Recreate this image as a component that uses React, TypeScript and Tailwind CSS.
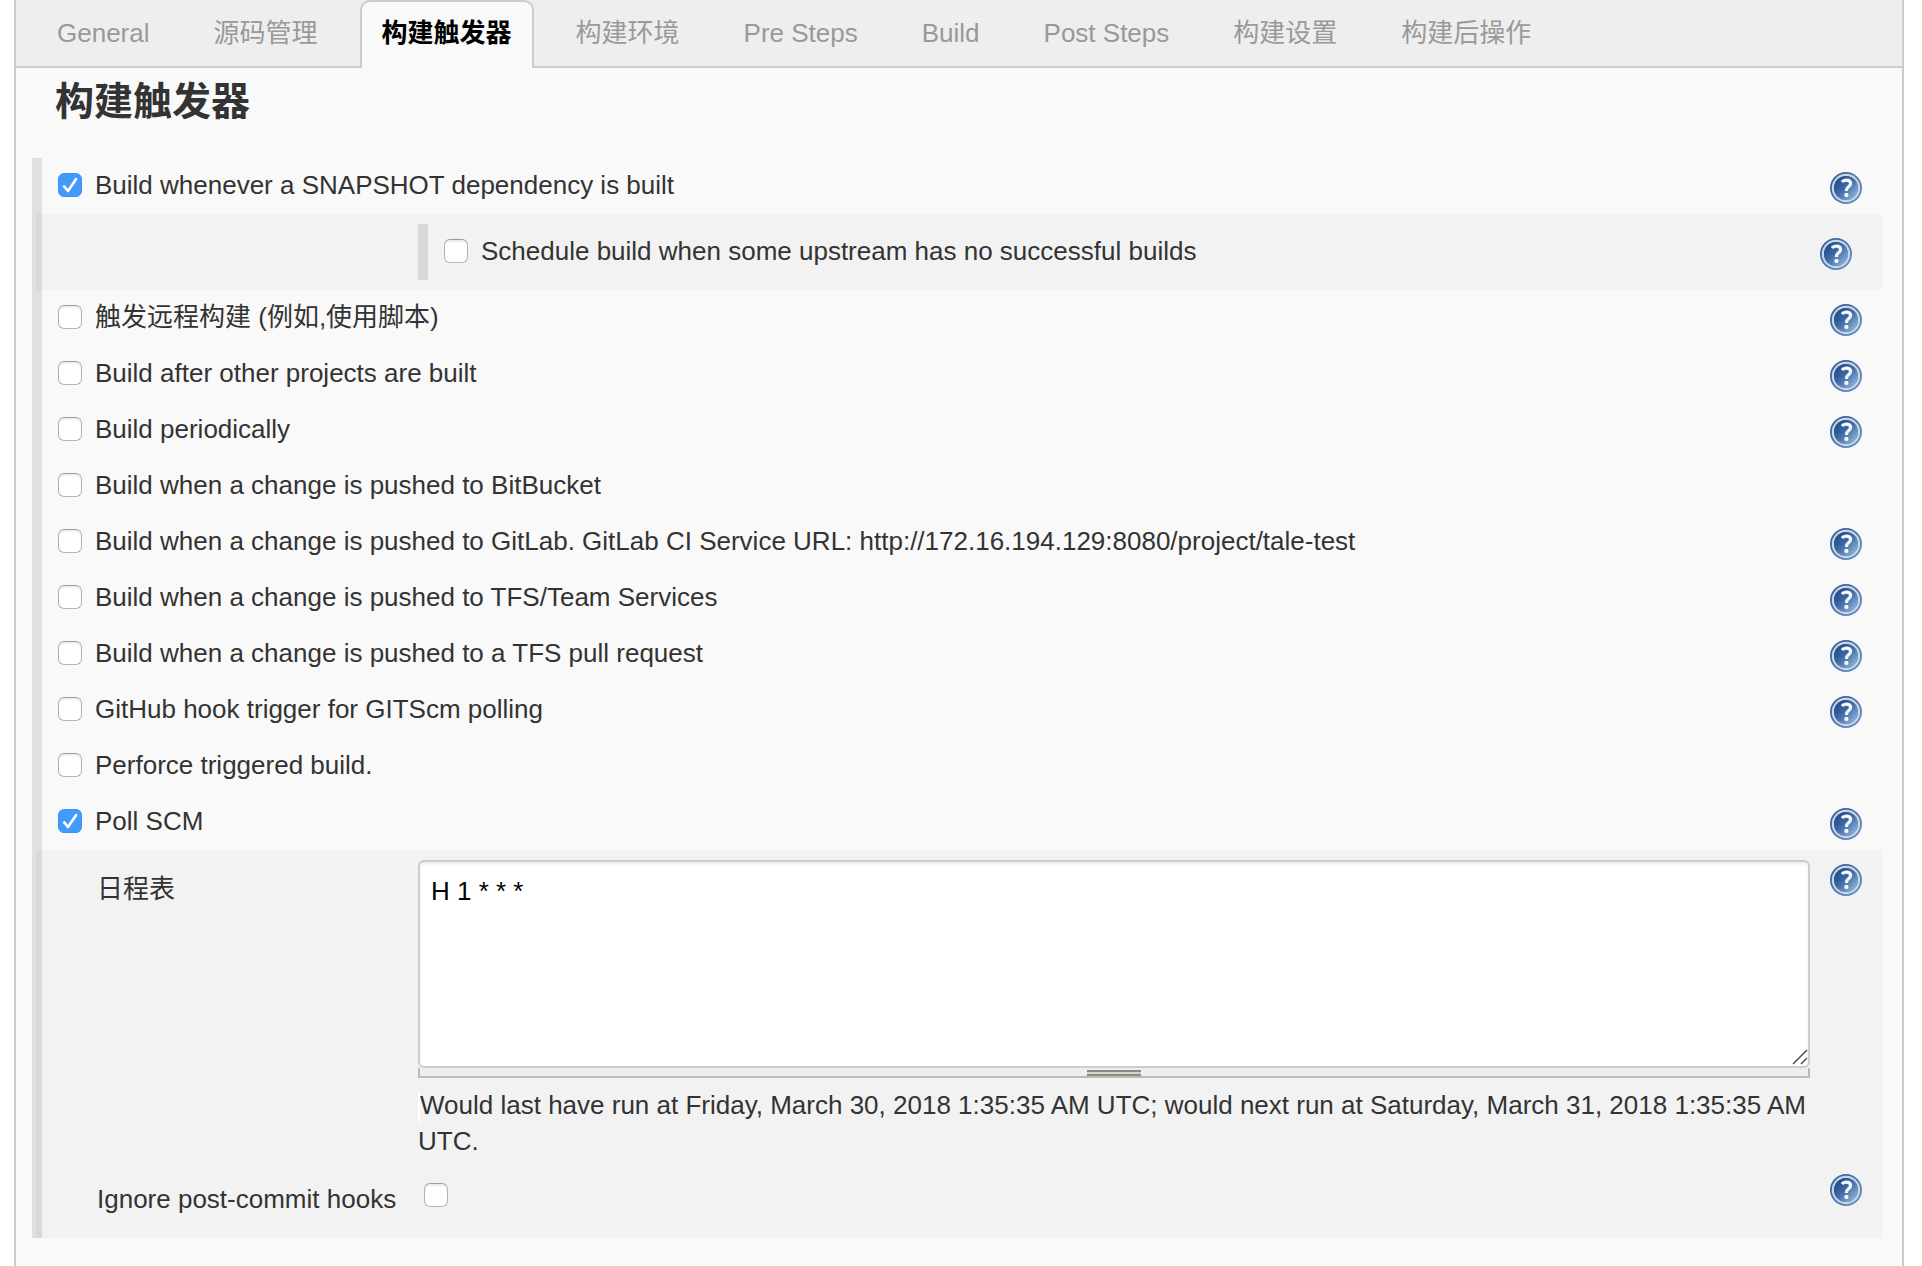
import { useState } from "react";
import type { ReactNode } from "react";

const tabs = [
  "General",
  "源码管理",
  "构建触发器",
  "构建环境",
  "Pre Steps",
  "Build",
  "Post Steps",
  "构建设置",
  "构建后操作",
];

const triggers = [
  { id: "remote", label: "触发远程构建 (例如,使用脚本)", help: true },
  { id: "after", label: "Build after other projects are built", help: true },
  { id: "periodic", label: "Build periodically", help: true },
  { id: "bitbucket", label: "Build when a change is pushed to BitBucket", help: false },
  {
    id: "gitlab",
    label:
      "Build when a change is pushed to GitLab. GitLab CI Service URL: http://172.16.194.129:8080/project/tale-test",
    help: true,
  },
  { id: "tfs", label: "Build when a change is pushed to TFS/Team Services", help: true },
  { id: "tfs-pr", label: "Build when a change is pushed to a TFS pull request", help: true },
  { id: "github", label: "GitHub hook trigger for GITScm polling", help: true },
  { id: "perforce", label: "Perforce triggered build.", help: false },
  { id: "poll", label: "Poll SCM", help: true, checked: true },
];

function HelpButton({ topic }: { topic: string }) {
  return (
    <button type="button" aria-label={`Help for ${topic}`} className="block size-8 shrink-0">
      <svg viewBox="0 0 32 32" className="size-8">
        <defs>
          <linearGradient id="help-ring" x1="0" y1="0" x2="1" y2="1">
            <stop offset="0" stopColor="#2c5896" />
            <stop offset="1" stopColor="#6f94c2" />
          </linearGradient>
          <linearGradient id="help-disc" x1="0.1" y1="0.1" x2="0.9" y2="0.9">
            <stop offset="0" stopColor="#1f4988" />
            <stop offset="0.45" stopColor="#3f6aa4" />
            <stop offset="1" stopColor="#8fb2da" />
          </linearGradient>
        </defs>
        <circle cx="16" cy="16" r="16" fill="url(#help-ring)" />
        <circle cx="16" cy="16" r="13.1" fill="none" stroke="#c6d5e8" strokeWidth="2.2" />
        <circle cx="16" cy="16" r="12" fill="url(#help-disc)" />
        <path
          d="M11.9 10C13 8.6 14.4 8.1 16.2 8.1c2.6 0 4.4 1.2 4.4 3.4 0 1.7-1 2.5-2.3 3.5-1.4 1-1.9 1.8-1.9 4"
          fill="none"
          stroke="#f4f7fb"
          strokeWidth="3.2"
        />
        <rect x="14.4" y="21" width="4" height="4" rx="1.4" fill="#f4f7fb" />
      </svg>
    </button>
  );
}

function Checkbox({ id, checked = false }: { id: string; checked?: boolean }) {
  return (
    <span className="relative block size-6 shrink-0">
      <input
        id={id}
        type="checkbox"
        defaultChecked={checked}
        className="peer block size-6 appearance-none rounded-[6px] border border-[#b4b4b4] border-t-[#9c9c9c] bg-white shadow-[inset_0_2px_2px_rgba(0,0,0,0.08)] checked:border-[#3b93f7] checked:bg-[#429bf9] checked:shadow-none"
      />
      <svg
        viewBox="0 0 24 24"
        className="pointer-events-none absolute inset-0 hidden size-6 peer-checked:block"
      >
        <path
          d="M6.2 13.4 10 18 18 6.2"
          fill="none"
          stroke="#fff"
          strokeWidth="2.6"
          strokeLinecap="round"
          strokeLinejoin="round"
        />
      </svg>
    </span>
  );
}

function TriggerRow({
  id,
  label,
  help = true,
  checked = false,
}: {
  id: string;
  label: string;
  help?: boolean;
  checked?: boolean;
}) {
  return (
    <div className="flex min-h-14 items-start pr-5 pl-4">
      <div className="flex grow items-start pt-[9px]">
        <span className="pt-[6px]">
          <Checkbox id={id} checked={checked} />
        </span>
        <label htmlFor={id} className="pl-[13px]">
          {label}
        </label>
      </div>
      {help && (
        <div className="pt-[14px]">
          <HelpButton topic={label} />
        </div>
      )}
    </div>
  );
}

function Shaded({ children }: { children: ReactNode }) {
  return <div className="-ml-[6px] bg-black/[0.027] pt-[10px] pb-[10px]">{children}</div>;
}

export default function App() {
  const [active, setActive] = useState(2);

  return (
    <div className="min-h-screen bg-white pr-[18px] pl-[14px] font-['Liberation_Sans','Noto_Sans_CJK_SC',sans-serif] text-[26px] leading-9 text-[#333]">
      <main className="min-h-screen border-x-2 border-[#ccc] bg-[#f9f9f9]">
        <nav className="flex h-[68px] gap-5 border-b-2 border-[#ccc] bg-[#eee] pl-[19px]">
          {tabs.map((tab, i) => (
            <button
              key={tab}
              type="button"
              onClick={() => setActive(i)}
              className={
                i === active
                  ? "-mb-[2px] h-[68px] shrink-0 rounded-t-[10px] border-2 border-b-0 border-[#ccc] bg-[#f9f9f9] px-5 pb-1 font-bold text-black"
                  : "h-[66px] shrink-0 border-2 border-b-0 border-transparent px-5 pb-[2px] text-[#999]"
              }
            >
              {tab}
            </button>
          ))}
        </nav>

        <h1 className="pt-[10px] pb-8 pl-[39px] text-[39px] leading-[48px] font-bold">构建触发器</h1>

        <form className="mr-5 ml-4 border-l-10 border-[#e0e0e0]">
          <TriggerRow id="snapshot" label="Build whenever a SNAPSHOT dependency is built" checked />
          <Shaded>
            <div className="mr-[10px] ml-[382px] border-l-10 border-[#d9d9d9]">
              <TriggerRow
                id="upstream"
                label="Schedule build when some upstream has no successful builds"
              />
            </div>
          </Shaded>

          {triggers.map((t) => (
            <TriggerRow key={t.id} {...t} />
          ))}

          <Shaded>
            <div className="grid grid-cols-[382px_minmax(0,1fr)_auto] items-start pr-5">
              <label htmlFor="schedule" className="pt-[11px] pl-[61px]">
                日程表
              </label>
              <div>
                <div className="relative">
                  <textarea
                    id="schedule"
                    defaultValue="H 1 * * *"
                    className="block h-[208px] w-full resize-none rounded-[6px] border-2 border-[#ccc] bg-white px-[11px] pt-[11px] text-black shadow-[inset_0_2px_3px_rgba(0,0,0,0.08)] outline-none"
                  />
                  <svg
                    viewBox="0 0 16 16"
                    className="pointer-events-none absolute right-[2px] bottom-[3px] size-4"
                  >
                    <path
                      d="M1 15 15 1M9 15l6-6"
                      fill="none"
                      stroke="#555"
                      strokeWidth="1.6"
                    />
                  </svg>
                </div>
                <div className="flex h-[10px] justify-center border-2 border-t-0 border-[#bbbbb3] bg-[#eee] pt-[2px]">
                  <div className="h-[6px] w-[54px] border-y-2 border-[#888a80] bg-[#d3d7cf]" />
                </div>
                <p className="pt-[9px] pb-px before:float-left before:mt-[5px] before:h-[30px] before:w-[2px] before:bg-white">
                  Would last have run at Friday, March 30, 2018 1:35:35 AM UTC; would next run at
                  Saturday, March 31, 2018 1:35:35 AM UTC.
                </p>
              </div>
              <div className="pt-1 pl-5">
                <HelpButton topic="日程表" />
              </div>

              <label htmlFor="ignore-hooks" className="pt-[21px] pb-[11px] pl-[61px]">
                Ignore post-commit hooks
              </label>
              <div className="pt-[23px] pl-[6px]">
                <Checkbox id="ignore-hooks" />
              </div>
              <div className="pt-[14px] pl-5">
                <HelpButton topic="Ignore post-commit hooks" />
              </div>
            </div>
          </Shaded>
        </form>
      </main>
    </div>
  );
}
